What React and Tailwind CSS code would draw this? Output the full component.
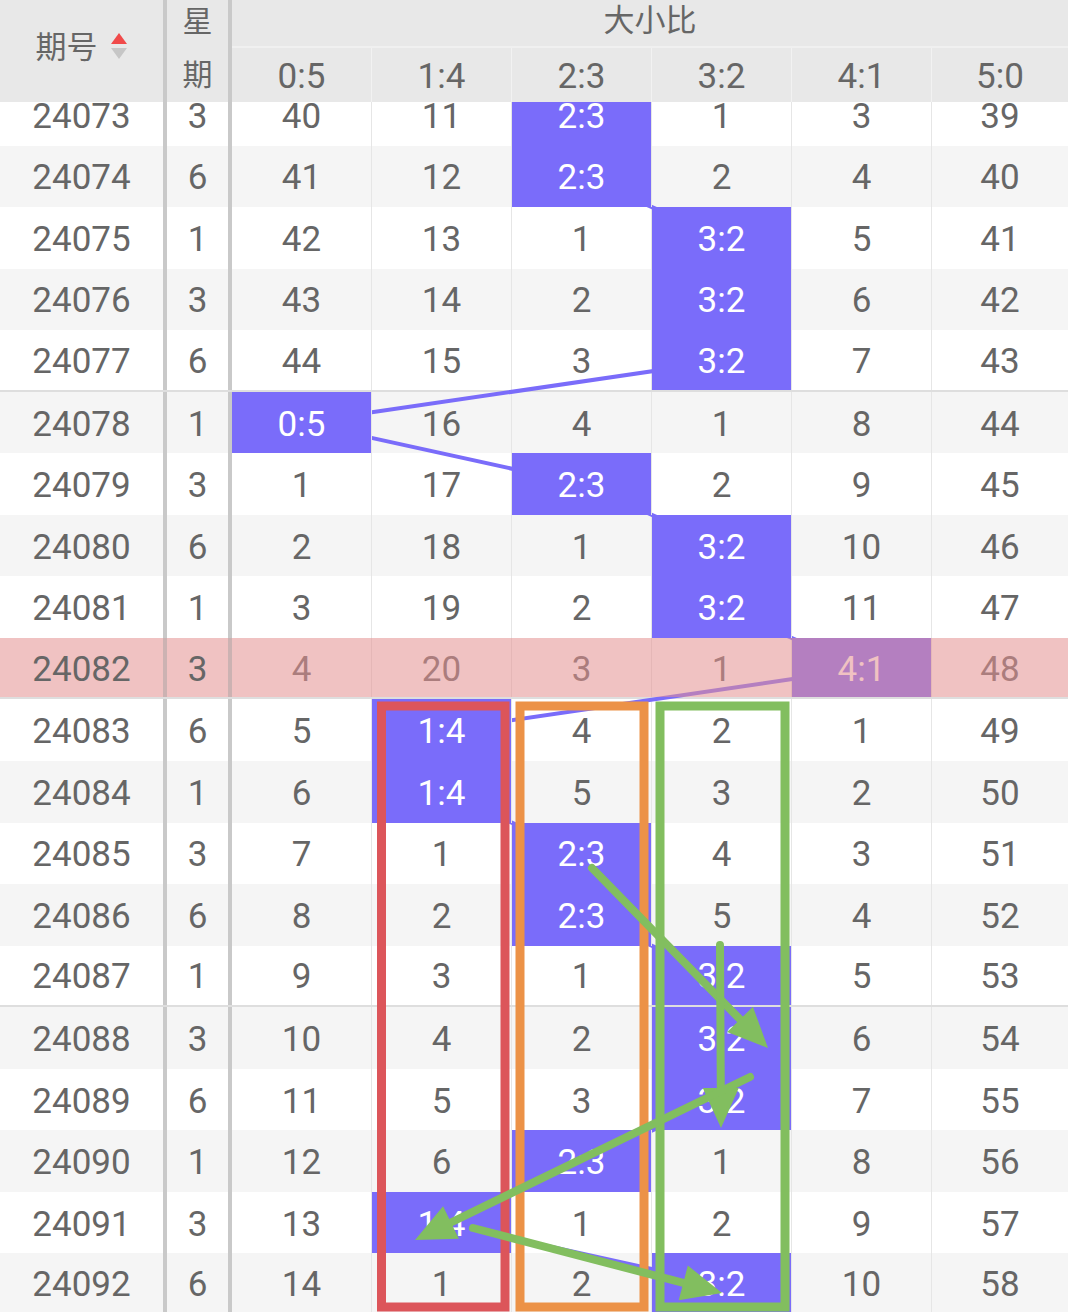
import React from "react";

const PURPLE = "#7a6cfa";
const ROW_H = 61.56;
const COL_X0 = 232;
const COL_W = 140;

const rows = [
  ["24073", "3", ["40", "11", "2:3", "1", "3", "39"], 2],
  ["24074", "6", ["41", "12", "2:3", "2", "4", "40"], 2],
  ["24075", "1", ["42", "13", "1", "3:2", "5", "41"], 3],
  ["24076", "3", ["43", "14", "2", "3:2", "6", "42"], 3],
  ["24077", "6", ["44", "15", "3", "3:2", "7", "43"], 3],
  ["24078", "1", ["0:5", "16", "4", "1", "8", "44"], 0],
  ["24079", "3", ["1", "17", "2:3", "2", "9", "45"], 2],
  ["24080", "6", ["2", "18", "1", "3:2", "10", "46"], 3],
  ["24081", "1", ["3", "19", "2", "3:2", "11", "47"], 3],
  ["24082", "3", ["4", "20", "3", "1", "4:1", "48"], 4],
  ["24083", "6", ["5", "1:4", "4", "2", "1", "49"], 1],
  ["24084", "1", ["6", "1:4", "5", "3", "2", "50"], 1],
  ["24085", "3", ["7", "1", "2:3", "4", "3", "51"], 2],
  ["24086", "6", ["8", "2", "2:3", "5", "4", "52"], 2],
  ["24087", "1", ["9", "3", "1", "3:2", "5", "53"], 3],
  ["24088", "3", ["10", "4", "2", "3:2", "6", "54"], 3],
  ["24089", "6", ["11", "5", "3", "3:2", "7", "55"], 3],
  ["24090", "1", ["12", "6", "2:3", "1", "8", "56"], 2],
  ["24091", "3", ["13", "1:4", "1", "2", "9", "57"], 1],
  ["24092", "6", ["14", "1", "2", "3:2", "10", "58"], 3],
];

const headers = ["0:5", "1:4", "2:3", "3:2", "4:1", "5:0"];

function SortIcon() {
  return (
    <svg width="18" height="30" viewBox="0 0 18 30" className="shrink-0">
      <polygon points="9,1 17,12 1,12" fill="#f04a4a" />
      <polygon points="1,16 17,16 9,27" fill="#c6c6c6" />
    </svg>
  );
}

function Row({ r, idx }) {
  const [period, week, vals, hi] = r;
  const isPink = idx === 9;
  const groupEnd = idx % 5 === 4;
  const rowBg = isPink ? "bg-white" : idx % 2 === 0 ? "bg-white" : "bg-[#f5f5f5]";
  const leftBg = isPink ? "bg-[#f0c2c2]" : "";
  const thick = isPink ? "border-[#ccb2b2]" : "border-[#c9c9c9]";
  return (
    <div
      className={`relative flex h-[61.56px] ${rowBg} ${
        groupEnd ? "border-b-2 border-[#dedede]" : ""
      }`}
    >
      <div
        className={`w-[167px] shrink-0 border-r-4 ${thick} ${leftBg} flex items-center justify-center pt-[3px]`}
      >
        {period}
      </div>
      <div
        className={`w-[65px] shrink-0 border-r-4 ${thick} ${leftBg} flex items-center justify-center pt-[3px]`}
      >
        {week}
      </div>
      {vals.map((v, i) => {
        const last = i === 5;
        const isHi = i === hi;
        return (
          <div
            key={i}
            className={`${last ? "flex-1" : "w-[140px] shrink-0 border-r border-[#e6e6e6]"} flex items-center justify-center pt-[3px] ${
              isHi ? "relative z-20 bg-[#7a6cfa] text-white" : ""
            }`}
          >
            {v}
          </div>
        );
      })}
      {isPink && (
        <div className="absolute inset-y-0 left-[232px] right-0 z-30 bg-[rgba(228,144,144,0.55)]" />
      )}
    </div>
  );
}

function Arrow({ x1, y1, x2, y2, L = 40, W = 18 }) {
  const dx = x2 - x1;
  const dy = y2 - y1;
  const len = Math.hypot(dx, dy);
  const ux = dx / len;
  const uy = dy / len;
  const bx = x2 - ux * L;
  const by = y2 - uy * L;
  const nx = -uy;
  const ny = ux;
  const pts = `${x2},${y2} ${bx + nx * W},${by + ny * W} ${bx - nx * W},${by - ny * W}`;
  return (
    <g>
      <line
        x1={x1}
        y1={y1}
        x2={bx + ux * 4}
        y2={by + uy * 4}
        stroke="#82be5f"
        strokeWidth="8"
        strokeLinecap="round"
      />
      <polygon points={pts} fill="#82be5f" />
    </g>
  );
}

export default function App() {
  const linePts = rows
    .map((r, i) => `${COL_X0 + COL_W * r[3] + 70},${i * ROW_H + ROW_H / 2}`)
    .join(" ");

  return (
    <div className="relative h-[1312px] w-[1068px] overflow-hidden bg-white font-['Roboto','Noto_Sans_CJK_SC',sans-serif] text-[35px] leading-none text-[#666]">
      {/* Header */}
      <div className="relative z-10 flex h-[102px] bg-[#e8e8e8]">
        <div className="w-[167px] shrink-0 border-r-4 border-[#c9c9c9] flex items-center justify-center gap-[12px] pb-[8px]">
          <span className="text-[31px]">期号</span>
          <SortIcon />
        </div>
        <div className="w-[65px] shrink-0 border-r-4 border-[#c9c9c9] flex flex-col text-[30px]">
          <div className="h-[48px] flex items-center justify-center pb-[5px]">星</div>
          <div className="flex-1 flex items-center justify-center">期</div>
        </div>
        <div className="flex-1 flex flex-col">
          <div className="h-[48px] flex items-center justify-center border-b-2 border-[#f0f0f0] text-[31px] pb-[5px]">
            大小比
          </div>
          <div className="flex flex-1">
            {headers.map((h, i) => (
              <div
                key={h}
                className={`${i === 5 ? "flex-1" : "w-[140px] shrink-0 border-r border-[#f2f2f2]"} flex items-center justify-center pt-[2px]`}
              >
                {h}
              </div>
            ))}
          </div>
        </div>
      </div>

      {/* Body */}
      <div className="relative z-0 -mt-[18px]">
        {rows.map((r, i) => (
          <Row key={r[0]} r={r} idx={i} />
        ))}
        <svg
          className="pointer-events-none absolute inset-0 z-10"
          width="1068"
          height={rows.length * ROW_H}
        >
          <polyline
            points={linePts}
            fill="none"
            stroke={PURPLE}
            strokeWidth="4"
          />
        </svg>
      </div>

      {/* Annotations */}
      <svg
        className="pointer-events-none absolute left-0 top-0 z-20"
        width="1068"
        height="1312"
      >
        <rect x="381.5" y="706" width="123.5" height="601" fill="none" stroke="#dc555a" strokeWidth="9" />
        <rect x="520" y="706" width="124" height="601" fill="none" stroke="#ec9247" strokeWidth="9" />
        <rect x="660" y="706" width="125" height="601" fill="none" stroke="#82be5f" strokeWidth="9" />
        <Arrow x1={592} y1={868} x2={768} y2={1048} />
        <Arrow x1={720} y1={945} x2={721} y2={1128} />
        <Arrow x1={750} y1={1077} x2={415} y2={1240} />
        <Arrow x1={473} y1={1228} x2={722} y2={1293} />
      </svg>
    </div>
  );
}
